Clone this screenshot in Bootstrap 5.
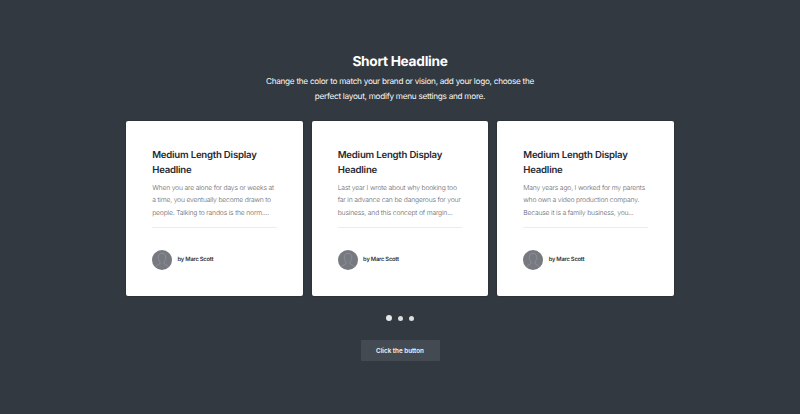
<!DOCTYPE html>
<html lang="en">
<head>
<meta charset="utf-8">
<meta name="viewport" content="width=device-width, initial-scale=1">
<title>Short Headline</title>
<link href="https://cdn.jsdelivr.net/npm/bootstrap@5.3.0/dist/css/bootstrap.min.css" rel="stylesheet">
<style>
body{background:#333940;font-family:Inter,"Liberation Sans",sans-serif;height:414px;overflow:hidden;text-rendering:geometricPrecision}
.showcase{width:548px;padding-top:51px}
.headline{font-size:13.7px;line-height:22px;font-weight:700;letter-spacing:-.28px}
.intro{width:290px;font-size:8.2px;line-height:15px;letter-spacing:-.27px;color:#f8f9fa;margin-top:1px}
.posts{--bs-gutter-x:0;gap:8.6px;margin-top:17px}
.posts>.col{min-width:0}
.post{height:174.5px;border-radius:2px;border:0;box-shadow:0 0 2px rgba(0,0,0,.35)}
.post-body{padding:28px 26.2px 0}
.post-title{font-size:9.6px;line-height:14.7px;font-weight:600;color:#252932;letter-spacing:-.21px}
.post-text{font-size:6.8px;line-height:12.6px;font-weight:300;color:#64686d;letter-spacing:-.19px;margin-top:3.4px;padding-bottom:7.5px;border-bottom:1px solid #ececee;white-space:nowrap}
.author{margin-top:22px;gap:5.4px;font-size:5.8px;line-height:20px;font-weight:600;color:#34373d;letter-spacing:-.23px}
.avatar{width:20px;height:20px}
.dots{gap:5.8px;margin-top:19px;height:7px}
.dot{width:5px;height:5px;background:#dcdee0}
.dot-current{width:6.4px;height:6.4px;background:#e6e7e9}
.cta{--bs-btn-color:#f4f5f6;--bs-btn-bg:#444a52;--bs-btn-border-width:0;--bs-btn-border-radius:1px;width:79px;height:21px;padding:0;margin-top:18px;font-size:6.3px;line-height:22px;font-weight:600}
</style>
</head>
<body>
<main class="showcase mx-auto d-flex flex-column align-items-center">
  <h1 class="headline text-white text-center mb-0">Short Headline</h1>
  <p class="intro text-center mb-0">Change the color to match your brand or vision, add your logo, choose the<br>perfect layout, modify menu settings and more.</p>
  <svg width="0" height="0" class="position-absolute" aria-hidden="true">
    <symbol id="person" viewBox="0 0 20 20">
      <circle cx="10" cy="10" r="10" fill="#777980"/>
      <path d="M3.5 17c.6-2.3 4.7-2 4.7-4.1 0-1.2-2-2.6-2-5.4C6.200 4.800 7.700 3.300 10 3.300s3.800 1.500 3.800 4.200c0 2.800-2 4.200-2 5.400 0 2.100 4.100 1.800 4.700 4.100" fill="none" stroke="#989ba3" stroke-width=".6"/>
    </symbol>
  </svg>
  <section class="posts row flex-nowrap w-100">
    <div class="col"><article class="post card"><div class="post-body">
      <h2 class="post-title mb-0">Medium Length Display<br>Headline</h2>
      <p class="post-text mb-0">When you are alone for days or weeks at<br>a time, you eventually become drawn to<br>people. Talking to randos is the norm....</p>
      <div class="author d-flex align-items-center"><svg class="avatar"><use href="#person"/></svg><span>by Marc Scott</span></div>
    </div></article></div>
    <div class="col"><article class="post card"><div class="post-body">
      <h2 class="post-title mb-0">Medium Length Display<br>Headline</h2>
      <p class="post-text mb-0">Last year I wrote about why booking too<br>far in advance can be dangerous for your<br>business, and this concept of margin...</p>
      <div class="author d-flex align-items-center"><svg class="avatar"><use href="#person"/></svg><span>by Marc Scott</span></div>
    </div></article></div>
    <div class="col"><article class="post card"><div class="post-body">
      <h2 class="post-title mb-0">Medium Length Display<br>Headline</h2>
      <p class="post-text mb-0">Many years ago, I worked for my parents<br>who own a video production company.<br>Because it is a family business, you...</p>
      <div class="author d-flex align-items-center"><svg class="avatar"><use href="#person"/></svg><span>by Marc Scott</span></div>
    </div></article></div>
  </section>
  <div class="dots d-flex align-items-center">
    <span class="dot dot-current rounded-circle"></span><span class="dot rounded-circle"></span><span class="dot rounded-circle"></span>
  </div>
  <button type="button" class="cta btn">Click the button</button>
</main>
<script src="https://cdn.jsdelivr.net/npm/bootstrap@5.3.0/dist/js/bootstrap.bundle.min.js"></script>
</body>
</html>
